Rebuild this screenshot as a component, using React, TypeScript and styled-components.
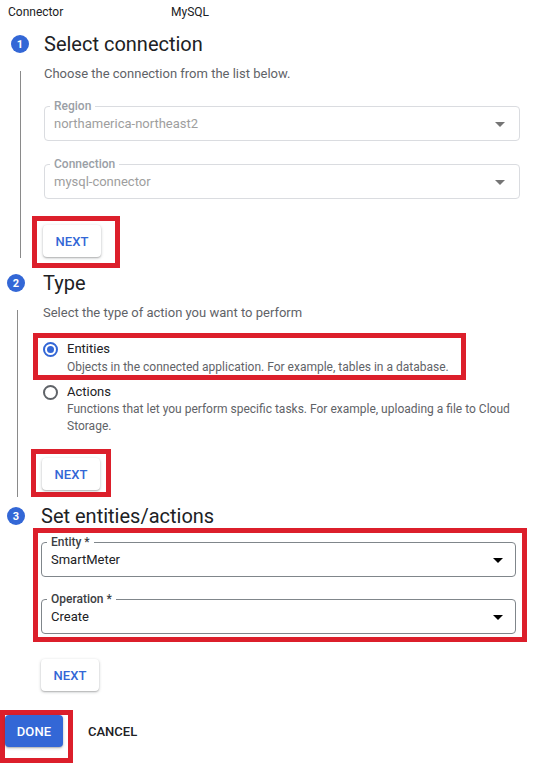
import React from "react";
import styled, { createGlobalStyle } from "styled-components";

const GlobalStyle = createGlobalStyle`
  html, body { margin: 0; padding: 0; background: #ffffff; }
  body { font-family: Roboto, "Liberation Sans", Arial, sans-serif; color: #202124; }
  * { box-sizing: border-box; }
`;

const BLUE = "#3367d6";
const RED = "#dc1f2b";

const Page = styled.div`
  width: 544px;
  min-height: 767px;
  overflow: hidden;
`;

const TopBar = styled.div`
  display: grid;
  grid-template-columns: 163px auto;
  align-items: center;
  height: 24px;
  padding-left: 8px;
  font-size: 12px;
  color: #202124;
`;

const StepHead = styled.div<{ $mt: number; $pl: number; $gap: number }>`
  display: flex;
  align-items: center;
  height: 24px;
  margin-top: ${(p) => p.$mt}px;
  padding-left: ${(p) => p.$pl}px;
  gap: ${(p) => p.$gap}px;
`;

const Badge = styled.span`
  display: inline-flex;
  align-items: center;
  justify-content: center;
  width: 18px;
  height: 18px;
  border-radius: 50%;
  background: ${BLUE};
  color: #fff;
  font-size: 11px;
  font-weight: 700;
`;

const StepTitle = styled.h2`
  margin: 0;
  font-size: 20px;
  line-height: 24px;
  font-weight: 400;
  color: #202124;
`;

const StepBody = styled.div<{
  $x: number;
  $pr: number;
  $lineX?: number;
  $lineTop?: number;
  $lineBottom?: number;
}>`
  position: relative;
  padding-left: ${(p) => p.$x}px;
  padding-right: ${(p) => p.$pr}px;
  &::before {
    content: "";
    display: ${(p) => (p.$lineX === undefined ? "none" : "block")};
    position: absolute;
    left: ${(p) => p.$lineX ?? 0}px;
    top: ${(p) => p.$lineTop ?? 0}px;
    bottom: ${(p) => p.$lineBottom ?? 0}px;
    width: 1px;
    background: #8a8a8a;
  }
`;

const Hint = styled.p`
  margin: 8px 0 0;
  font-size: 13px;
  line-height: 20px;
  color: #5f6368;
`;

const Highlight = styled.div<{
  $mt: number;
  $ml: number;
  $pad: string;
  $width?: number;
}>`
  margin-top: ${(p) => p.$mt}px;
  margin-left: ${(p) => p.$ml}px;
  padding: ${(p) => p.$pad};
  border: 5px solid ${RED};
  width: ${(p) => (p.$width ? `${p.$width}px` : "fit-content")};
`;

const ButtonSlot = styled.div<{ $mt: number }>`
  margin-top: ${(p) => p.$mt}px;
`;

const Field = styled.fieldset<{ $mt: number; $disabled?: boolean; $pr: number }>`
  margin: ${(p) => p.$mt}px 0 0;
  padding: 1px ${(p) => p.$pr}px 6px 9px;
  border: 1px solid ${(p) => (p.$disabled ? "#dadce0" : "#80868b")};
  border-radius: 4px;
  min-width: 0;
`;

const Legend = styled.legend<{ $disabled?: boolean }>`
  padding: 0 4px;
  margin-left: -4px;
  font-size: 12px;
  line-height: 14px;
  font-weight: 500;
  color: ${(p) => (p.$disabled ? "#9aa0a6" : "#3c4043")};
`;

const FieldRow = styled.div`
  display: flex;
  align-items: center;
  height: 20px;
`;

const FieldValue = styled.span<{ $disabled?: boolean }>`
  flex: 1;
  font-size: 13px;
  line-height: 20px;
  color: ${(p) => (p.$disabled ? "#9e9e9e" : "#202124")};
`;

const Arrow = styled.svg`
  display: block;
  width: 10px;
  height: 5px;
`;

const RaisedButton = styled.button<{ $primary?: boolean }>`
  display: block;
  height: 32px;
  width: 58px;
  padding: 0;
  border: none;
  border-radius: 4px;
  background: ${(p) => (p.$primary ? BLUE : "#ffffff")};
  color: ${(p) => (p.$primary ? "#ffffff" : BLUE)};
  box-shadow: 0 1px 3px rgba(60, 64, 67, 0.35), 0 1px 1px rgba(60, 64, 67, 0.15);
  font-family: Roboto, "Liberation Sans", Arial, sans-serif;
  font-size: 13px;
  font-weight: 500;
  letter-spacing: 0.1px;
`;

const TextButton = styled.button`
  border: none;
  background: transparent;
  padding: 0;
  font-family: Roboto, "Liberation Sans", Arial, sans-serif;
  font-size: 13px;
  font-weight: 500;
  color: #202124;
`;

const RadioRow = styled.div<{ $mt?: number }>`
  display: flex;
  align-items: center;
  gap: 9px;
  margin-top: ${(p) => p.$mt ?? 0}px;
  font-size: 13px;
  line-height: 18px;
  color: #202124;
`;

const RadioMark = styled.span<{ $on?: boolean }>`
  position: relative;
  display: inline-block;
  width: 15px;
  height: 15px;
  border-radius: 50%;
  border: 2px solid ${(p) => (p.$on ? BLUE : "#5f6368")};
  &::after {
    content: "";
    display: ${(p) => (p.$on ? "block" : "none")};
    position: absolute;
    inset: 2px;
    border-radius: 50%;
    background: ${BLUE};
  }
`;

const RadioDesc = styled.div<{ $lh: number; $mt?: number }>`
  margin-top: ${(p) => p.$mt ?? 0}px;
  padding-left: 24px;
  font-size: 12px;
  line-height: ${(p) => p.$lh}px;
  color: #5f6368;
`;

const Footer = styled.div`
  display: flex;
  align-items: flex-start;
  gap: 15px;
  margin-top: 19px;
`;

const CancelWrap = styled.div`
  height: 42px;
  display: flex;
  align-items: center;
`;

function Dropdown(props: {
  label: string;
  value: string;
  disabled?: boolean;
  mt: number;
  pr: number;
}) {
  const fill = props.disabled ? "#757575" : "#000000";
  return (
    <Field $mt={props.mt} $disabled={props.disabled} $pr={props.pr}>
      <Legend $disabled={props.disabled}>{props.label}</Legend>
      <FieldRow>
        <FieldValue $disabled={props.disabled}>{props.value}</FieldValue>
        <Arrow viewBox="0 0 10 5">
          <path d="M0 0 L10 0 L5 5 Z" fill={fill} />
        </Arrow>
      </FieldRow>
    </Field>
  );
}

export default function App() {
  return (
    <Page>
      <GlobalStyle />
      <TopBar>
        <span>Connector</span>
        <span>MySQL</span>
      </TopBar>

      <StepHead $mt={8} $pl={11} $gap={15}>
        <Badge>1</Badge>
        <StepTitle>Select connection</StepTitle>
      </StepHead>
      <StepBody $x={44} $pr={24} $lineX={20} $lineTop={7} $lineBottom={10}>
        <Hint>Choose the connection from the list below.</Hint>
        <Dropdown label="Region" value="northamerica-northeast2" disabled mt={15} pr={14} />
        <Dropdown label="Connection" value="mysql-connector" disabled mt={16} pr={14} />
        <Highlight $mt={17} $ml={-12} $pad="4px 14px 6px 6px">
          <RaisedButton>NEXT</RaisedButton>
        </Highlight>
      </StepBody>

      <StepHead $mt={3} $pl={7} $gap={18}>
        <Badge>2</Badge>
        <StepTitle>Type</StepTitle>
      </StepHead>
      <StepBody $x={43} $pr={24} $lineX={17} $lineTop={7} $lineBottom={0}>
        <Hint>Select the type of action you want to perform</Hint>
        <Highlight $mt={10} $ml={-10} $pad="2px 12px 0 5px">
          <RadioRow>
            <RadioMark $on />
            <span>Entities</span>
          </RadioRow>
          <RadioDesc $lh={15} $mt={2}>
            Objects in the connected application. For example, tables in a database.
          </RadioDesc>
        </Highlight>
        <RadioRow $mt={3}>
          <RadioMark />
          <span>Actions</span>
        </RadioRow>
        <RadioDesc $lh={17}>
          Functions that let you perform specific tasks. For example, uploading a file to Cloud Storage.
        </RadioDesc>
        <Highlight $mt={14} $ml={-12} $pad="4px 6px 2px 6px">
          <RaisedButton>NEXT</RaisedButton>
        </Highlight>
      </StepBody>

      <StepHead $mt={7} $pl={7} $gap={16}>
        <Badge>3</Badge>
        <StepTitle>Set entities/actions</StepTitle>
      </StepHead>
      <StepBody $x={41} $pr={0}>
        <Highlight $mt={0} $ml={-8} $pad="2px 6px 3px 3px" $width={494}>
          <Dropdown label="Entity *" value="SmartMeter" mt={0} pr={12} />
          <Dropdown label="Operation *" value="Create" mt={15} pr={12} />
        </Highlight>
        <ButtonSlot $mt={17}>
          <RaisedButton>NEXT</RaisedButton>
        </ButtonSlot>
      </StepBody>

      <Footer>
        <Highlight $mt={0} $ml={0} $pad="0 5px 11px 0">
          <RaisedButton $primary>DONE</RaisedButton>
        </Highlight>
        <CancelWrap>
          <TextButton>CANCEL</TextButton>
        </CancelWrap>
      </Footer>
    </Page>
  );
}
